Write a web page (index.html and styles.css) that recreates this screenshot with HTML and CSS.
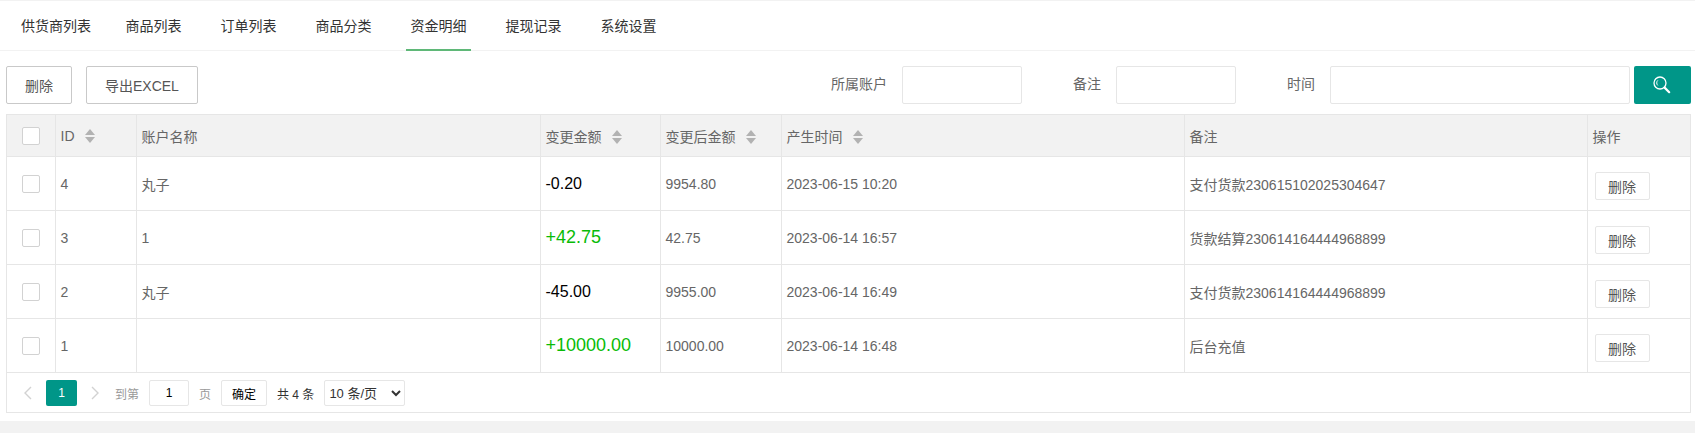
FILE: index.html
```html
<!DOCTYPE html>
<html lang="zh-CN">
<head>
<meta charset="utf-8">
<title>资金明细</title>
<link rel="stylesheet" href="styles.css">
</head>
<body>
<div class="panel">
  <ul class="tabs">
    <li class="tab">供货商列表</li>
    <li class="tab">商品列表</li>
    <li class="tab">订单列表</li>
    <li class="tab">商品分类</li>
    <li class="tab tab-active">资金明细</li>
    <li class="tab">提现记录</li>
    <li class="tab">系统设置</li>
  </ul>
  <div class="content">
    <div class="toolbar">
      <div class="actions">
        <button class="btn">删除</button>
        <button class="btn">导出EXCEL</button>
      </div>
      <form class="search">
        <label class="search-label">所属账户</label>
        <input class="field field-s">
        <label class="search-label">备注</label>
        <input class="field field-s">
        <label class="search-label">时间</label>
        <input class="field field-l">
        <button type="button" class="search-btn" aria-label="搜索">
          <svg width="22" height="22" viewBox="1 0 22 22" fill="none" stroke="#fff">
            <circle cx="9" cy="9" r="6" stroke-width="1.3"/>
            <path d="M6.8 6.4a3.4 3.4 0 0 0 0 5" stroke-width="1"/>
            <path d="M13.6 13.6l4.6 4.6" stroke-width="2.2" stroke-linecap="round"/>
          </svg>
        </button>
      </form>
    </div>
    <div class="frame">
      <table class="grid">
        <thead>
          <tr>
            <th class="c-check"><span class="check"></span></th>
            <th class="c-id">ID<span class="sort"></span></th>
            <th class="c-name">账户名称</th>
            <th class="c-amount">变更金额<span class="sort"></span></th>
            <th class="c-after">变更后金额<span class="sort"></span></th>
            <th class="c-time">产生时间<span class="sort"></span></th>
            <th class="c-note">备注</th>
            <th class="c-op">操作</th>
          </tr>
        </thead>
        <tbody>
          <tr>
            <td><span class="check"></span></td><td>4</td><td>丸子</td>
            <td class="minus">-0.20</td><td>9954.80</td><td>2023-06-15 10:20</td>
            <td>支付货款230615102025304647</td><td><button class="mini">删除</button></td>
          </tr>
          <tr>
            <td><span class="check"></span></td><td>3</td><td>1</td>
            <td class="plus">+42.75</td><td>42.75</td><td>2023-06-14 16:57</td>
            <td>货款结算230614164444968899</td><td><button class="mini">删除</button></td>
          </tr>
          <tr>
            <td><span class="check"></span></td><td>2</td><td>丸子</td>
            <td class="minus">-45.00</td><td>9955.00</td><td>2023-06-14 16:49</td>
            <td>支付货款230614164444968899</td><td><button class="mini">删除</button></td>
          </tr>
          <tr>
            <td><span class="check"></span></td><td>1</td><td></td>
            <td class="plus">+10000.00</td><td>10000.00</td><td>2023-06-14 16:48</td>
            <td>后台充值</td><td><button class="mini">删除</button></td>
          </tr>
        </tbody>
      </table>
      <div class="pager">
        <svg class="chev" width="12" height="16" viewBox="0 0 12 16" fill="none" stroke="#d2d2d2" stroke-width="1.4"><path d="M9 2L3 8l6 6"/></svg>
        <span class="page-on">1</span>
        <svg class="chev chev-next" width="12" height="16" viewBox="0 0 12 16" fill="none" stroke="#d2d2d2" stroke-width="1.4"><path d="M3 2l6 6-6 6"/></svg>
        <span class="muted">到第</span>
        <input class="page-input" value="1">
        <span class="muted">页</span>
        <button class="page-ok">确定</button>
        <span class="count">共 4 条</span>
        <select class="page-size"><option>10 条/页</option></select>
      </div>
    </div>
  </div>
</div>
</body>
</html>
```

FILE: styles.css
```css
* { box-sizing: border-box; }
html, body { margin: 0; padding: 0; }
body {
  height: 433px;
  background: #f2f2f2;
  font-family: "Liberation Sans", "Noto Sans CJK SC", sans-serif;
  font-size: 14px;
  color: #666;
  overflow: hidden;
}
.panel {
  height: 421px;
  background: #fff;
  border-top: 1px solid #f2f2f2;
}
.tabs {
  display: flex;
  gap: 30px;
  height: 50px;
  margin: 0;
  padding: 0 0 0 21px;
  list-style: none;
  border-bottom: 1px solid #f2f2f2;
}
.tab {
  min-width: 65px;
  height: 50px;
  line-height: 50px;
  text-align: center;
  color: #333;
}
.tab-active { border-bottom: 2px solid #5fb878; }
.content { padding: 15px 4px 0 6px; }
.toolbar {
  display: flex;
  justify-content: space-between;
  height: 38px;
  margin-bottom: 10px;
}
.actions { display: flex; gap: 14px; }
.btn {
  height: 38px;
  padding: 0 18px;
  background: #fff;
  border: 1px solid #c9c9c9;
  border-radius: 2px;
  font: inherit;
  color: #555;
}
.search { display: flex; align-items: stretch; margin: 0; }
.search-label {
  width: 94px;
  padding-right: 15px;
  line-height: 36px;
  text-align: right;
  color: #666;
}
.field {
  height: 38px;
  background: #fff;
  border: 1px solid #e6e6e6;
  border-radius: 2px;
  outline: none;
}
.field-s { width: 120px; }
.field-l { width: 300px; }
.search-btn {
  display: flex;
  align-items: center;
  justify-content: center;
  width: 57px;
  height: 38px;
  margin-left: 4px;
  padding: 0;
  background: #009688;
  border: 0;
  border-radius: 2px;
}
.frame { border: 1px solid #e6e6e6; border-top: 0; height: 299px; }
.grid {
  width: 100%;
  table-layout: fixed;
  border-collapse: collapse;
}
.grid th, .grid td {
  padding: 0 5px;
  border: 1px solid #e6e6e6;
  font-weight: 400;
  text-align: left;
  color: #666;
  font-size: 14px;
}
.grid tr > :first-child { border-left: 0; }
.grid tr > :last-child { border-right: 0; }
.grid thead th { height: 42px; background: #f2f2f2; }
.grid tbody td { height: 54px; }
.grid tbody tr:last-child td { border-bottom: 1px solid #e6e6e6; }
.c-check { width: 48px; }
.c-id { width: 81px; }
.c-name { width: 404px; }
.c-amount { width: 120px; }
.c-after { width: 121px; }
.c-time { width: 403px; }
.c-note { width: 403px; }
.c-op { width: 103px; }
.grid .c-check, .grid td:first-child { padding-left: 15px; }
.check {
  display: block;
  width: 18px;
  height: 18px;
  background: #fff;
  border: 1px solid #d2d2d2;
  border-radius: 2px;
}
.sort {
  display: inline-block;
  position: relative;
  width: 10px;
  height: 14px;
  margin-left: 10px;
  vertical-align: -2px;
}
.sort::before, .sort::after {
  content: "";
  position: absolute;
  left: 0;
  border-left: 5px solid transparent;
  border-right: 5px solid transparent;
}
.sort::before { top: 0; border-bottom: 6px solid #b2b2b2; }
.sort::after { bottom: 0; border-top: 6px solid #b2b2b2; }
.grid td.minus { font-size: 16px; color: #000; }
.grid td.plus { font-size: 18px; color: #09bb07; }
.mini {
  display: block;
  width: 55px;
  height: 28px;
  margin: 5px 0 0 2px;
  padding: 0;
  background: #fff;
  border: 1px solid #e6e6e6;
  border-radius: 2px;
  font: inherit;
  color: #555;
}
.pager {
  display: flex;
  align-items: center;
  height: 39px;
  padding: 1px 0 0 15px;
  font-size: 12px;
}
.chev { flex: none; }
.page-on {
  width: 31px;
  height: 26px;
  margin-left: 12px;
  line-height: 26px;
  text-align: center;
  color: #fff;
  background: #009688;
  border-radius: 2px;
}
.chev-next { margin-left: 12px; }
.muted { margin-left: 14px; color: #999; }
.page-input {
  width: 40px;
  height: 26px;
  margin: 0 0 0 10px;
  padding: 0;
  text-align: center;
  font: inherit;
  color: #000;
  border: 1px solid #e6e6e6;
  border-radius: 2px;
  outline: none;
}
.page-input + .muted { margin-left: 10px; }
.page-ok {
  width: 46px;
  height: 26px;
  margin-left: 10px;
  padding: 0;
  background: #fff;
  border: 1px solid #e6e6e6;
  border-radius: 2px;
  font: inherit;
  color: #000;
}
.count { margin-left: 10px; color: #333; }
.page-size {
  width: 81px;
  height: 26px;
  margin-left: 10px;
  background: #fff;
  border: 1px solid #e6e6e6;
  border-radius: 2px;
  font: inherit;
  font-size: 13px;
  color: #333;
}
```
